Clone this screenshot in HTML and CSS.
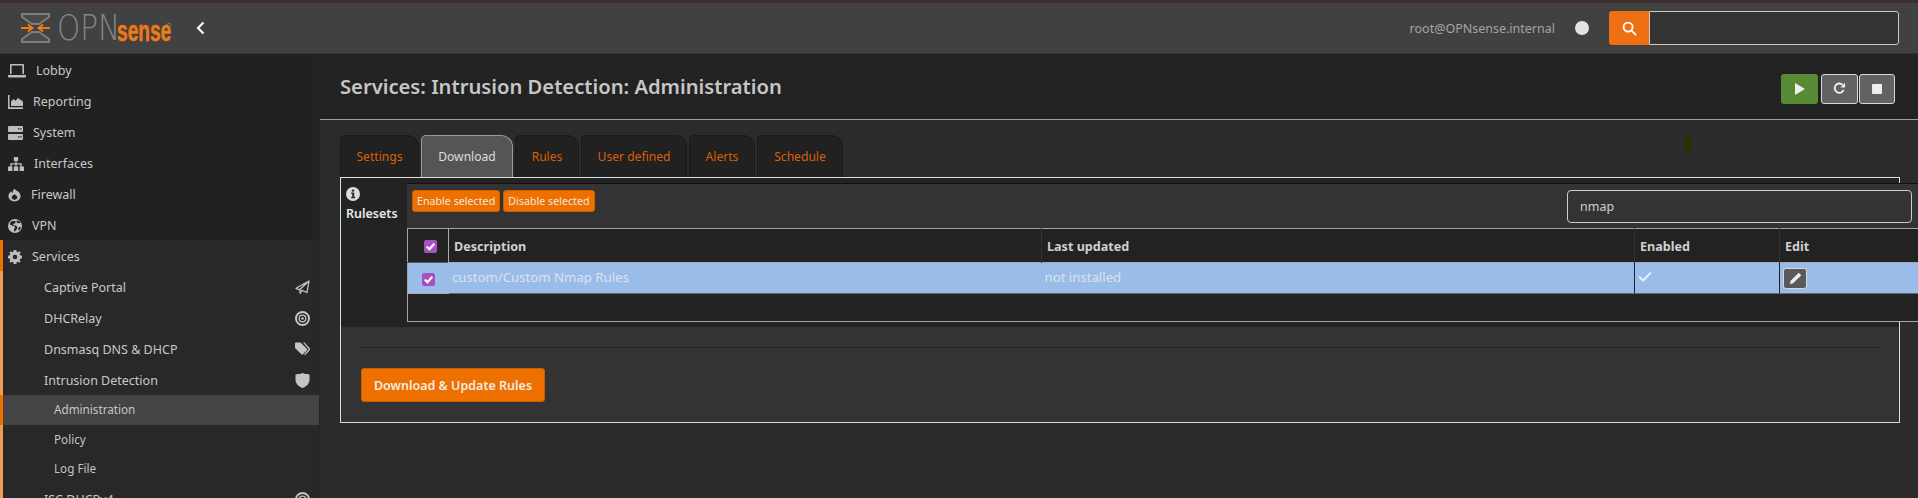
FILE: index.html
```html
<!DOCTYPE html>
<html lang="en">
<head>
<meta charset="utf-8">
<title>Services: Intrusion Detection: Administration</title>
<link rel="stylesheet" href="styles.css">
</head>
<body>
<svg class="defs" width="0" height="0" aria-hidden="true">
  <symbol id="i-laptop" viewBox="0 0 18 14"><path d="M3 0h12a1 1 0 0 1 1 1v9h-1.600V1.600H3.600V10H2V1a1 1 0 0 1 1-1zM0 11h18v1.400a1 1 0 0 1-1 1H1a1 1 0 0 1-1-1z"/></symbol>
  <symbol id="i-chart" viewBox="0 0 15 14"><path d="M0 0h1.500v12.300H15V14H0z"/><path d="M3 11V6.500l2.500-2.500 2 1.800L10 3l5 3.500V11z"/></symbol>
  <symbol id="i-server" viewBox="0 0 15 14"><path fill-rule="evenodd" d="M1 0h13a1 1 0 0 1 1 1v4a1 1 0 0 1-1 1H1a1 1 0 0 1-1-1V1a1 1 0 0 1 1-1zm9 2.200v1.400h1.400V2.200zm2.200 0v1.400h1.400V2.200zM1 8h13a1 1 0 0 1 1 1v4a1 1 0 0 1-1 1H1a1 1 0 0 1-1-1V9a1 1 0 0 1 1-1zm9 2.200v1.400h1.400v-1.400zm2.200 0v1.400h1.400v-1.400z" /></symbol>
  <symbol id="i-sitemap" viewBox="0 0 16 14"><path d="M5.800 0h4.400v4H8.600v2.200h5.100V9.800h-1.400V7.400H8.600v2.400H7.400V7.400H3.700v2.400H2.300V6.200h5.100V4H5.800z"/><path d="M0 9.500h4.400V14H0zM5.800 9.500h4.400V14H5.800zM11.600 9.500H16V14h-4.400z"/></symbol>
  <symbol id="i-fire" viewBox="0 0 14 14"><path fill-rule="evenodd" d="M7 0c.6 1.400 1.800 1.900 3 2.800C12.200 4.300 13.500 6 13.500 8.200 13.500 11.600 10.600 14 7 14S.5 11.600.5 8.200C.5 5.800 2 4.300 3.500 3c.2 1 .6 1.600 1.300 2C5 3.200 5.700 1.500 7 0zm0 6.200C5.400 7 4 8.200 4 9.800 4 11 5.300 12 7 12s3-1 3-2.200C10 8.200 8.500 7.400 7 6.200z"/></symbol>
  <symbol id="i-globe" viewBox="0 0 14 14"><path fill-rule="evenodd" d="M7 0a7 7 0 1 1 0 14A7 7 0 0 1 7 0zM3 2.500 1.700 5.200l2.600 1.500 1.900.2.800 1.700-1.200 2.200.8 2 1.400-1.600 1.300-2-.2-1.700-2-1.200-1.300.3L4.900 5l1.700-.6 1.100-1-.7-1.700zm6-.9L8.300 3l1.500 1 2 .2.500-1.200A6 6 0 0 0 9 1.600zM11 8l-.8 2.500.9 1A6 6 0 0 0 12.800 8z"/></symbol>
  <symbol id="i-cog" viewBox="0 0 14 14"><path fill-rule="evenodd" d="M5.700 0h2.600l.4 1.800 1.200.5L11.500 1.300l1.200 1.200-1 1.600.5 1.200 1.800.4v2.600l-1.800.4-.5 1.200 1 1.600-1.200 1.200-1.600-1-1.200.5L8.300 14H5.700l-.4-1.800-1.200-.5-1.600 1-1.200-1.200 1-1.600-.5-1.200L0 8.300V5.700l1.800-.4.5-1.200-1-1.600 1.200-1.200 1.600 1 1.200-.5zM7 4.700a2.300 2.300 0 1 0 0 4.600 2.300 2.300 0 0 0 0-4.600z"/></symbol>
  <symbol id="i-plane" viewBox="0 0 15 15"><path fill="none" stroke="currentColor" stroke-width="1.300" stroke-linejoin="round" d="M14 1 1 8.300l3.600 1.500L14 1l-2 11.500-5-2.200-1.900 3v-3.500"/></symbol>
  <symbol id="i-target" viewBox="0 0 15 15"><g fill="none" stroke="currentColor"><circle cx="7.500" cy="7.500" r="6.500" stroke-width="2"/><circle cx="7.500" cy="7.500" r="3.300" stroke-width="1.300"/></g><circle cx="7.500" cy="7.500" r="1.300"/></symbol>
  <symbol id="i-tags" viewBox="0 0 15 14"><path d="M1 0h4.500l6.300 6.300a1.200 1.200 0 0 1 0 1.700L8 11.800a1.200 1.200 0 0 1-1.700 0L0 5.500V1a1 1 0 0 1 1-1z"/><path d="M8 0h1.500l5 5.500a2 2 0 0 1 0 2.500L10 12.800l-.9-.9 4-4.500a1 1 0 0 0 0-1.400z"/></symbol>
  <symbol id="i-shield" viewBox="0 0 14 15"><path d="M1 1.200C3 1.200 5.500.8 7 0c1.500.8 4 1.200 6 1.200.6 0 1 .4 1 1V7c0 4-4 7-7 8-3-1-7-4-7-8V2.200c0-.6.400-1 1-1z"/></symbol>
</svg>

<header class="topbar">
  <div class="brand">
    <svg class="logo" viewBox="0 0 160 34" width="160" height="34" role="img" aria-label="OPNsense">
      <path class="logo-frame" d="M2 2H29V5L19 12H12L2 5ZM2 30H29V27L19 20H12L2 27Z"/>
      <path class="logo-arrow" d="M1 16H12M8 12.500 12.500 16 8 19.500M30 16H19M23 12.500 18.500 16 23 19.500"/>
      <text class="logo-opn" transform="translate(37 28) scale(.82 1)">OPN</text>
      <text class="logo-sense" transform="translate(97 29) scale(.66 1)">sense</text>
      <circle class="logo-reg" cx="149" cy="13" r="1.800"/>
    </svg>
    <svg class="collapse" viewBox="0 0 9 14" width="9" height="14"><path d="M7.500 1.500 2 7l5.500 5.500"/></svg>
  </div>
  <div class="top-right">
    <span class="user">root@OPNsense.internal</span>
    <span class="status-dot"></span>
    <div class="top-search">
      <span class="search-btn"><svg viewBox="0 0 16 16" width="15" height="15"><circle cx="6.500" cy="6.500" r="4.800"/><path d="m10 10 5 5"/></svg></span>
      <input class="search-input" type="text" aria-label="Search">
    </div>
  </div>
</header>

<div class="layout">
  <nav class="sidebar">
    <a class="item"><svg class="ic w17"><use href="#i-laptop"/></svg>Lobby</a>
    <a class="item"><svg class="ic w15"><use href="#i-chart"/></svg>Reporting</a>
    <a class="item"><svg class="ic w15"><use href="#i-server"/></svg>System</a>
    <a class="item"><svg class="ic w16"><use href="#i-sitemap"/></svg>Interfaces</a>
    <a class="item"><svg class="ic w13"><use href="#i-fire"/></svg>Firewall</a>
    <a class="item"><svg class="ic w14"><use href="#i-globe"/></svg>VPN</a>
    <div class="open-group">
      <a class="item current"><svg class="ic w14"><use href="#i-cog"/></svg>Services</a>
      <a class="sub">Captive Portal<svg class="sub-ic"><use href="#i-plane"/></svg></a>
      <a class="sub">DHCRelay<svg class="sub-ic"><use href="#i-target"/></svg></a>
      <a class="sub">Dnsmasq DNS &amp; DHCP<svg class="sub-ic"><use href="#i-tags"/></svg></a>
      <a class="sub">Intrusion Detection<svg class="sub-ic"><use href="#i-shield"/></svg></a>
      <a class="leaf active">Administration</a>
      <a class="leaf">Policy</a>
      <a class="leaf">Log File</a>
      <a class="sub">ISC DHCPv4<svg class="sub-ic"><use href="#i-target"/></svg></a>
    </div>
  </nav>

  <main class="content">
    <div class="page-head">
      <h1>Services: Intrusion Detection: Administration</h1>
      <div class="service-btns">
        <span class="svc green"><svg viewBox="0 0 12 12" width="12" height="12"><path d="M1 0v12l10-6z"/></svg></span>
        <span class="svc grey"><svg viewBox="0 0 14 14" width="13" height="13"><path class="refresh" d="M11.500 8.500A5 5 0 1 1 10.500 3.200"/><path d="M13 .8V6H8z"/></svg></span>
        <span class="svc grey tight"><svg viewBox="0 0 10 10" width="10" height="10"><rect width="10" height="10" rx="1"/></svg></span>
      </div>
    </div>
    <span class="stray-mark"></span>

    <div class="tabs">
      <a class="tab">Settings</a>
      <a class="tab on">Download</a>
      <a class="tab">Rules</a>
      <a class="tab">User defined</a>
      <a class="tab">Alerts</a>
      <a class="tab">Schedule</a>
    </div>

    <section class="panel">
      <div class="rules-row">
        <div class="rules-label">
          <svg class="info" viewBox="0 0 14 14" width="14" height="14"><circle cx="7" cy="7" r="7"/><rect class="info-i" x="5.800" y="2.600" width="2.400" height="2"/><path class="info-i" d="M5.200 5.600h3v4.200h1v1.400H5.200V9.800h1V7h-1z"/></svg>
          <strong>Rulesets</strong>
        </div>
        <div class="grid-wrap">
          <div class="toolbar">
            <div class="bulk">
              <button class="mini">Enable selected</button>
              <button class="mini">Disable selected</button>
            </div>
            <input class="filter" type="text" value="nmap" aria-label="Filter">
          </div>
          <table class="rules">
            <colgroup><col class="c-check"><col class="c-desc"><col class="c-upd"><col class="c-en"><col class="c-edit"></colgroup>
            <thead>
              <tr><th class="ck"><span class="box"><svg viewBox="0 0 12 12"><path d="m2.500 6 2.500 2.500 4.500-5"/></svg></span></th><th>Description</th><th>Last updated</th><th>Enabled</th><th>Edit</th></tr>
            </thead>
            <tbody>
              <tr class="sel">
                <td class="ck"><span class="box"><svg viewBox="0 0 12 12"><path d="m2.500 6 2.500 2.500 4.500-5"/></svg></span></td>
                <td>custom/Custom Nmap Rules</td>
                <td>not installed</td>
                <td class="dv"><svg class="tick" viewBox="0 0 14 11" width="14" height="11"><path d="m1 5.500 4 4 8-8"/></svg></td>
                <td class="dv"><span class="edit-btn"><svg viewBox="0 0 14 14" width="13" height="13"><path d="M10.500.8 13.200 3.500 4.500 12.200 1 13l.8-3.500z"/></svg></span></td>
              </tr>
            </tbody>
            <tfoot><tr class="foot"><td colspan="5"></td></tr></tfoot>
          </table>
        </div>
      </div>
      <div class="actions">
        <hr class="sep">
        <button class="primary">Download &amp; Update Rules</button>
      </div>
    </section>
  </main>
</div>
</body>
</html>
```
FILE: styles.css
```css
* { box-sizing: border-box; }
html, body { margin: 0; height: 498px; overflow: hidden; }
body {
  background: #2b2b2b;
  border-top: 3px solid #3b2f31;
  font-family: "Noto Sans", Lato, sans-serif;
  font-size: 12.5px;
  color: #c4c4c4;
}
.defs { position: absolute; }
a { text-decoration: none; color: inherit; }

/* top bar */
.topbar {
  height: 51px;
  background: #414141;
  border-bottom: 1px solid #333;
  display: flex;
  justify-content: space-between;
  align-items: center;
}
.brand { display: flex; align-items: center; padding-left: 20px; }
.logo { display: block; margin-top: 2px; overflow: visible; }
.logo-frame { fill: #4a4a4a; stroke: #7d7d7d; stroke-width: 2; }
.logo-arrow { fill: none; stroke: #ee7a15; stroke-width: 2; }
.logo-opn { font-family: "DejaVu Sans", sans-serif; font-weight: 200; font-size: 36px; fill: #858585; }
.logo-sense { font-family: "Liberation Sans", sans-serif; font-weight: 700; font-size: 29px; fill: #ee7a15; stroke: #ee7a15; stroke-width: .5; }
.logo-reg { fill: none; stroke: #888; stroke-width: .8; }
.collapse { margin-left: 16px; fill: none; stroke: #fff; stroke-width: 2.200; }
.top-right { display: flex; align-items: center; padding-right: 19px; }
.user { color: #a4a4a4; font-size: 12.500px; }
.status-dot { width: 14px; height: 14px; border-radius: 50%; background: #e2e2e2; margin-left: 20px; }
.top-search { display: flex; margin-left: 20px; height: 34px; }
.search-btn {
  width: 40px;
  background: #ee7012;
  border-radius: 3px 0 0 3px;
  display: flex;
  align-items: center;
  justify-content: center;
  fill: none;
  stroke: #fff;
  stroke-width: 2;
}
.search-input { width: 250px; background: #333; border: 1px solid #ccc; border-radius: 0 3px 3px 0; padding: 0 8px; color: #ccc; }

/* sidebar */
.layout { display: flex; height: 444px; }
.sidebar { width: 320px; flex: none; background: #212121; border-right: 1px solid #252525; overflow: hidden; }
.item { height: 31px; display: flex; align-items: center; gap: 10px; padding: 2px 0 0 8px; color: #c8c8c8; }
.ic { height: 14px; fill: #bdbdbd; flex: none; }
.w13 { width: 13px; } .w14 { width: 14px; } .w15 { width: 15px; } .w16 { width: 16px; } .w17 { width: 18px; }
.open-group { background: #282828; border-left: 3px solid #ef9a4c; }
.open-group .item.current { margin-left: -3px; border-left: 3px solid #ee7000; padding-left: 5px; }
.sub { height: 31px; display: flex; align-items: center; justify-content: space-between; padding: 2px 9px 0 41px; color: #c8c8c8; }
.sub-ic { width: 15px; height: 15px; fill: #c4c4c4; color: #c4c4c4; }
.leaf { height: 29px; display: flex; align-items: center; padding: 0 0 2px 51px; font-size: 11.700px; color: #c4c4c4; }
.leaf.active { height: 30px; background: #444; margin-left: -3px; padding-left: 51px; border-left: 3px solid #ee7000; }

/* content */
.content { flex: 1; min-width: 0; position: relative; }
.page-head {
  height: 66px;
  background: #222;
  border-bottom: 1px solid #9c9c9c;
  display: flex;
  align-items: center;
  justify-content: space-between;
  padding: 0 23px 2px 20px;
}
h1 { margin: 0; font-size: 20.200px; font-weight: 600; color: #c6c6c6; }
.service-btns { display: flex; margin-top: 6px; }
.svc { height: 30px; width: 37px; display: flex; align-items: center; justify-content: center; border-radius: 3px; fill: #eee; }
.green { background: #578a34; margin-right: 3px; }
.grey { background: #626262; border: 1px solid #d8d8d8; }
.tight { margin-left: 1px; width: 36px; }
.refresh { fill: none; stroke: #eee; stroke-width: 2; }
.stray-mark { position: absolute; left: 1365px; top: 80px; width: 6px; height: 19px; background: #2e2e00; }

.tabs {
  display: grid;
  grid-template-columns: 79px 92px 64px 106px 66px 86px;
  gap: 2px;
  padding: 15px 0 0 20px;
  height: 57px;
}
.tab {
  height: 42px;
  background: #212121;
  border: 1px solid #1a1a1a;
  border-bottom: 0;
  border-radius: 5px 12px 0 0;
  display: flex;
  align-items: center;
  justify-content: center;
  font-size: 12.100px;
  color: #dc5f06;
}
.tab.on { background: #555; color: #dedede; border-color: #999; }

.panel { margin: 0 18px 0 20px; height: 246px; border: 1px solid #ddd; background: #333; }
.rules-row { display: flex; height: 149px; background: #232323; }
.rules-label { width: 66px; flex: none; padding: 9px 0 0 5px; display: flex; flex-direction: column; align-items: flex-start; gap: 4px; color: #e8e8e8; }
.rules-label strong { font-weight: 600; font-size: 12.500px; }
.info { fill: #dcdcdc; display: block; }
.info-i { fill: #2b2b2b; }
.grid-wrap { width: 1511px; flex: none; padding-top: 5px; }
.toolbar { height: 45px; background: #333; border-top: 1px solid #111; display: flex; justify-content: space-between; padding: 6px 6px 0 5px; }
.bulk { display: flex; gap: 3px; align-items: flex-start; }
.mini { height: 22px; padding: 0 4px; background: #ed7000; border: 1px solid #c75f00; border-radius: 3px; color: #f0e6de; font: 10.700px "Noto Sans", Lato, sans-serif; }
.filter { width: 345px; height: 33px; background: #333; border: 1px solid #ccc; border-radius: 4px; padding: 0 12px; color: #cfcfcf; font: 12.500px "Noto Sans", Lato, sans-serif; }

.rules { width: 1511px; table-layout: fixed; border-collapse: collapse; border: 1px solid #a5a5a5; background: #222; }
.c-check { width: 41px; } .c-desc { width: 593px; } .c-upd { width: 593px; } .c-en { width: 145px; } .c-edit { width: 139px; }
.rules th { height: 34px; text-align: left; padding: 1px 5px 0; font-weight: 700; font-size: 12.600px; color: #d0d0d0; border-left: 1px solid #333; }
.rules th:nth-child(2) { border-left-color: #aaa; }
.rules th:first-child { border-left: 0; }
.rules th.ck { padding: 0 0 0 4px; text-align: center; }
.rules td { height: 31px; padding: 0 3px 2px; background: #9abce9; color: #dbe3ed; font-size: 13.200px; border-top: 1px solid #aaa; border-bottom: 1px solid #666; }
.rules td.dv { border-left: 1px solid #222; }
.rules td.ck { background: #9abce9; border-right: 1px solid #9abce9; border-top-color: #555; border-bottom-color: #aaa; padding: 0; text-align: center; }
.box { display: inline-block; width: 13px; height: 13px; background: #a84fc2; border-radius: 2px; vertical-align: middle; }
.box svg { display: block; width: 13px; height: 13px; fill: none; stroke: #fff; stroke-width: 2; }
.tick { fill: none; stroke: #e8eef6; stroke-width: 2; }
.edit-btn { display: inline-flex; width: 24px; height: 21px; align-items: center; justify-content: center; background: #5a5a5a; border: 1px solid #d8d8d8; border-radius: 3px; fill: #eee; margin-top: 2px; }
.rules .foot td { height: 28px; background: #222; border: 0; padding: 0; }

.actions { padding: 20px 19px 0 20px; }
.sep { margin: 0 0 20px; border: 0; border-top: 1px solid #222; }
.primary { height: 34px; width: 184px; background: #ed7000; border: 1px solid #c75f00; border-radius: 3px; color: #f3ebe4; font: 600 12.500px "Noto Sans", Lato, sans-serif; padding: 0; }
```
